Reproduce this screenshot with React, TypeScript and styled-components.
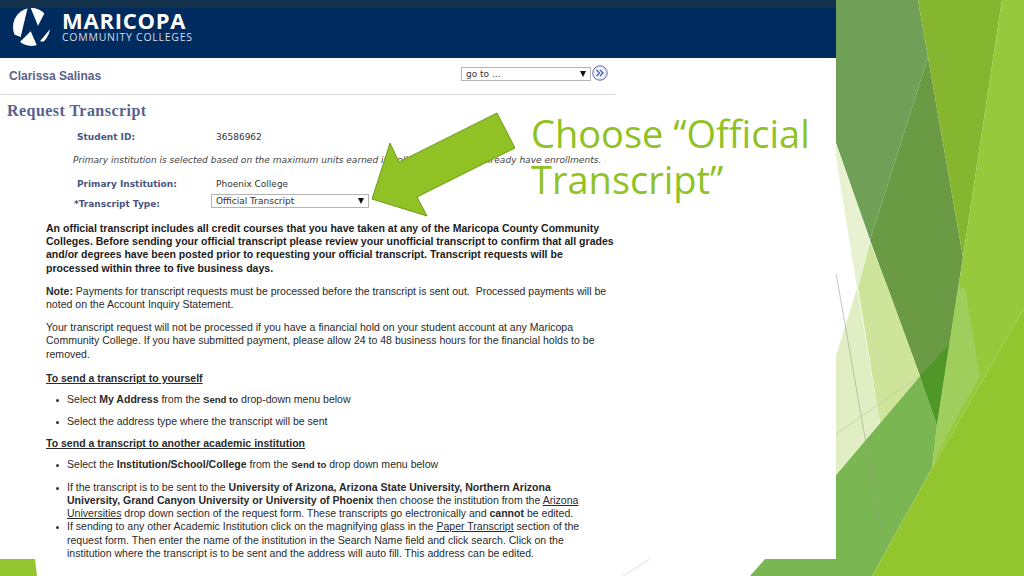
import React from "react";
import styled, { createGlobalStyle } from "styled-components";

const GlobalStyle = createGlobalStyle`
  html, body {
    margin: 0;
    padding: 0;
    background: #fff;
    overflow: hidden;
  }
`;

const Slide = styled.div`
  position: relative;
  width: 1024px;
  height: 576px;
  overflow: hidden;
  background: #fff;
  font-family: "Liberation Sans", Arial, sans-serif;
`;

const Backdrop = styled.svg`
  position: absolute;
  inset: 0;
`;

const Capture = styled.main`
  position: relative;
  width: 836px;
  height: 559px;
  background: #fff;
  display: flex;
  flex-direction: column;
`;

const Banner = styled.header`
  height: 58px;
  flex: none;
  box-sizing: border-box;
  background: #002b5f;
  border-top: 8px solid #14314c;
  display: flex;
  align-items: flex-start;
  gap: 12px;
  padding: 0 0 0 13px;
`;

const Wordmark = styled.div`
  color: #fff;
  display: flex;
  flex-direction: column;
  margin-top: 1px;
`;

const WordmarkTop = styled.div`
  font: 700 22px/23px "Open Sans", sans-serif;
  letter-spacing: 0.75px;
`;

const WordmarkSub = styled.div`
  font: 400 10.5px/11px "Open Sans", sans-serif;
  letter-spacing: 0.75px;
  color: #d5dde8;
`;

const Content = styled.div`
  width: 615px;
  display: flex;
  flex-direction: column;
`;

const UserRow = styled.div`
  height: 37px;
  box-sizing: border-box;
  border-bottom: 1px solid #d8d8d8;
  margin-left: 1px;
  display: flex;
  align-items: center;
  justify-content: space-between;
  padding: 0 7px 1px 8px;
`;

const UserName = styled.div`
  font: 700 12px "Liberation Sans", sans-serif;
  color: #5a6188;
`;

const GoTo = styled.div`
  display: flex;
  align-items: flex-start;
  gap: 0;
  margin-top: -4px;
`;

const Select = styled.div<{ $width: number; $top?: number }>`
  width: ${(p) => p.$width}px;
  height: 14px;
  margin-top: ${(p) => p.$top ?? 0}px;
  box-sizing: border-box;
  border: 1px solid #b4b4b4;
  background: #fff;
  display: flex;
  align-items: center;
  justify-content: space-between;
  padding: 0 4px;
  font: 9px "DejaVu Sans", sans-serif;
  color: #333;
`;

const Caret = styled.span`
  width: 0;
  height: 0;
  border-left: 3px solid transparent;
  border-right: 3px solid transparent;
  border-top: 6px solid #111;
`;

const PageTitle = styled.h1`
  margin: 7px 0 0 7px;
  font: 700 16px/17px "Liberation Serif", serif;
  letter-spacing: 0.45px;
  color: #59618c;
`;

const Fields = styled.div`
  margin: 11px 0 0 73px;
  display: flex;
  flex-direction: column;
`;

const FieldRow = styled.div<{ $top?: number }>`
  display: grid;
  grid-template-columns: 138px 1fr;
  align-items: center;
  height: 13px;
  margin-top: ${(p) => p.$top ?? 0}px;
`;

const FieldLabel = styled.div<{ $indent?: number; $drop?: number }>`
  padding-left: ${(p) => p.$indent ?? 4}px;
  margin-top: ${(p) => p.$drop ?? 0}px;
  font: 700 9px "DejaVu Sans", sans-serif;
  color: #4a5583;
`;

const FieldValue = styled.div`
  padding-left: 5px;
  font: 9px "DejaVu Sans", sans-serif;
  color: #333;
`;

const Hint = styled.div`
  margin-top: 11px;
  font: italic 9.05px/13px "DejaVu Sans", sans-serif;
  color: #444;
  white-space: nowrap;
`;

const Body = styled.div`
  margin: 17px 0 0 46px;
  width: 575px;
  font-size: 10.54px;
  line-height: 13.2px;
  color: #2a2a2a;
`;

const Para = styled.p<{ $bottom?: number }>`
  margin: 0 0 ${(p) => p.$bottom ?? 10}px;
  white-space: nowrap;
`;

const Lead = styled(Para)`
  font-weight: 700;
  color: #1c1c1c;
`;

const Heading = styled.div<{ $bottom: number }>`
  font-weight: 700;
  text-decoration: underline;
  margin-bottom: ${(p) => p.$bottom}px;
  white-space: nowrap;
`;

const BulletList = styled.ul`
  list-style: none;
  margin: 0;
  padding: 0 0 0 21px;
`;

const Bullet = styled.li<{ $bottom?: number }>`
  position: relative;
  margin-bottom: ${(p) => p.$bottom ?? 0}px;
  white-space: nowrap;
  &::before {
    content: "";
    position: absolute;
    left: -11px;
    top: 6px;
    width: 3px;
    height: 3px;
    border-radius: 50%;
    background: #333;
  }
`;

const MenuName = styled.b`
  font-size: 9.6px;
`;

const Callout = styled.div`
  position: absolute;
  left: 531px;
  top: 110px;
  width: 300px;
  font: 400 38px/46px "Open Sans", "DejaVu Sans", sans-serif;
  color: #90c226;
`;

const Arrow = styled.svg`
  position: absolute;
  left: 365px;
  top: 108px;
`;

const NextIcon = styled.svg`
  margin-top: -2px;
  margin-left: 1px;
`;

const LogoMark = () => (
  <svg width="37" height="38" viewBox="37 25 111 114">
    <clipPath id="logo-disc">
      <ellipse cx="92.5" cy="82" rx="55.5" ry="57" />
    </clipPath>
    <g clipPath="url(#logo-disc)" fill="#fff">
      <polygon points="82,20 60,112 30,100 30,20" />
      <polygon points="88,20 112,78 142,20" />
      <polygon points="60,125 90,95 112,145 60,145" />
      <polygon points="118,125 152,84 152,130" />
    </g>
  </svg>
);

export default function App() {
  return (
    <Slide>
      <GlobalStyle />
      <Backdrop width="1024" height="576" viewBox="0 0 1024 576">
        <polygon points="0,559 35,559 37,576 0,576" fill="#93c52f" />
        <polygon points="750,576 765,559 836,559 836,475 920,376 937,425 932,468 872,576" fill="#7ab651" />
        <polygon points="836,0 918,0 928,57 870,240 836,143" fill="#709f58" />
        <polygon points="928,57 963,257 937,425 920,376 870,240" fill="#6a9a44" />
        <polygon points="920,376 949,345 937,425" fill="#4f9729" />
        <polygon points="918,0 1002,0 963,257" fill="#86b52f" />
        <polygon points="1002,0 1024,0 1024,308 932,468 937,425 963,257" fill="#98c83c" />
        <polygon points="958,288 965,288 980,376 943,443 932,468 937,425" fill="#a0ce5c" />
        <polygon points="1024,308 1024,576 872,576 932,468" fill="#93c52f" />
        <polygon points="836,143 870,240 858,288 857,288 836,157" fill="#e8f1d0" />
        <polygon points="857,288 836,356 836,475 880,423" fill="#e1edc2" />
        <polygon points="870,242 888,288 920,376 880,423 858,288" fill="#cfe49b" />
        <line x1="836" y1="273" x2="885" y2="551" stroke="#9aa68a" strokeWidth="0.6" />
        <line x1="836" y1="434" x2="920" y2="376" stroke="#b9c99a" strokeWidth="0.6" />
        <line x1="623" y1="576" x2="650" y2="559" stroke="#cccccc" strokeWidth="0.6" />
      </Backdrop>
      <Capture>
        <Banner>
          <LogoMark />
          <Wordmark>
            <WordmarkTop>MARICOPA</WordmarkTop>
            <WordmarkSub>COMMUNITY COLLEGES</WordmarkSub>
          </Wordmark>
        </Banner>
        <Content>
          <UserRow>
            <UserName>Clarissa Salinas</UserName>
            <GoTo>
              <Select $width={130}>
                go to ...
                <Caret />
              </Select>
              <NextIcon width="16" height="16" viewBox="0 0 16 16">
                <circle cx="8" cy="8" r="7.2" fill="#eef0fa" stroke="#5a62a8" strokeWidth="1" />
                <path d="M4.5 5 L7.5 8 L4.5 11 M8 5 L11 8 L8 11" fill="none" stroke="#4a58b0" strokeWidth="1.2" />
              </NextIcon>
            </GoTo>
          </UserRow>
          <PageTitle>Request Transcript</PageTitle>
          <Fields>
            <FieldRow>
              <FieldLabel>Student ID:</FieldLabel>
              <FieldValue>36586962</FieldValue>
            </FieldRow>
            <Hint>
              Primary institution is selected based on the maximum units earned in colleges where you already have enrollments.
            </Hint>
            <FieldRow $top={10}>
              <FieldLabel>Primary Institution:</FieldLabel>
              <FieldValue>Phoenix College</FieldValue>
            </FieldRow>
            <FieldRow $top={2}>
              <FieldLabel $indent={1} $drop={7}>*Transcript Type:</FieldLabel>
              <Select $width={158}>
                Official Transcript
                <Caret />
              </Select>
            </FieldRow>
          </Fields>
          <Body>
            <Lead>
              An official transcript includes all credit courses that you have taken at any of the Maricopa County Community
              <br />
              Colleges. Before sending your official transcript please review your unofficial transcript to confirm that all grades
              <br />
              and/or degrees have been posted prior to requesting your official transcript. Transcript requests will be
              <br />
              processed within three to five business days.
            </Lead>
            <Para>
              <b>Note:</b> Payments for transcript requests must be processed before the transcript is sent out.&nbsp; Processed payments will be
              <br />
              noted on the Account Inquiry Statement.
            </Para>
            <Para $bottom={11}>
              Your transcript request will not be processed if you have a financial hold on your student account at any Maricopa
              <br />
              Community College. If you have submitted payment, please allow 24 to 48 business hours for the financial holds to be
              <br />
              removed.
            </Para>
            <Heading $bottom={8}>To send a transcript to yourself</Heading>
            <BulletList>
              <Bullet $bottom={9}>
                Select <b>My Address</b> from the <MenuName>Send to</MenuName> drop-down menu below
              </Bullet>
              <Bullet $bottom={9}>Select the address type where the transcript will be sent</Bullet>
            </BulletList>
            <Heading $bottom={7}>To send a transcript to another academic institution</Heading>
            <BulletList>
              <Bullet $bottom={10}>
                Select the <b>Institution/School/College</b> from the <MenuName>Send to</MenuName> drop down menu below
              </Bullet>
              <Bullet>
                If the transcript is to be sent to the <b>University of Arizona, Arizona State University, Northern Arizona</b>
                <br />
                <b>University, Grand Canyon University or University of Phoenix</b> then choose the institution from the <u>Arizona</u>
                <br />
                <u>Universities</u> drop down section of the request form. These transcripts go electronically and <b>cannot</b> be edited.
              </Bullet>
              <Bullet>
                If sending to any other Academic Institution click on the magnifying glass in the <u>Paper Transcript</u> section of the
                <br />
                request form. Then enter the name of the institution in the Search Name field and click search. Click on the
                <br />
                institution where the transcript is to be sent and the address will auto fill. This address can be edited.
              </Bullet>
            </BulletList>
          </Body>
        </Content>
      </Capture>
      <Arrow width="170" height="115" viewBox="365 108 170 115">
        <polygon
          points="497,113 515,148 417,197 427,216 372,199 390,143 399,162"
          fill="#90c226"
          stroke="#6f9a1a"
          strokeWidth="1"
        />
      </Arrow>
      <Callout>
        Choose “Official
        <br />
        Transcript”
      </Callout>
    </Slide>
  );
}
